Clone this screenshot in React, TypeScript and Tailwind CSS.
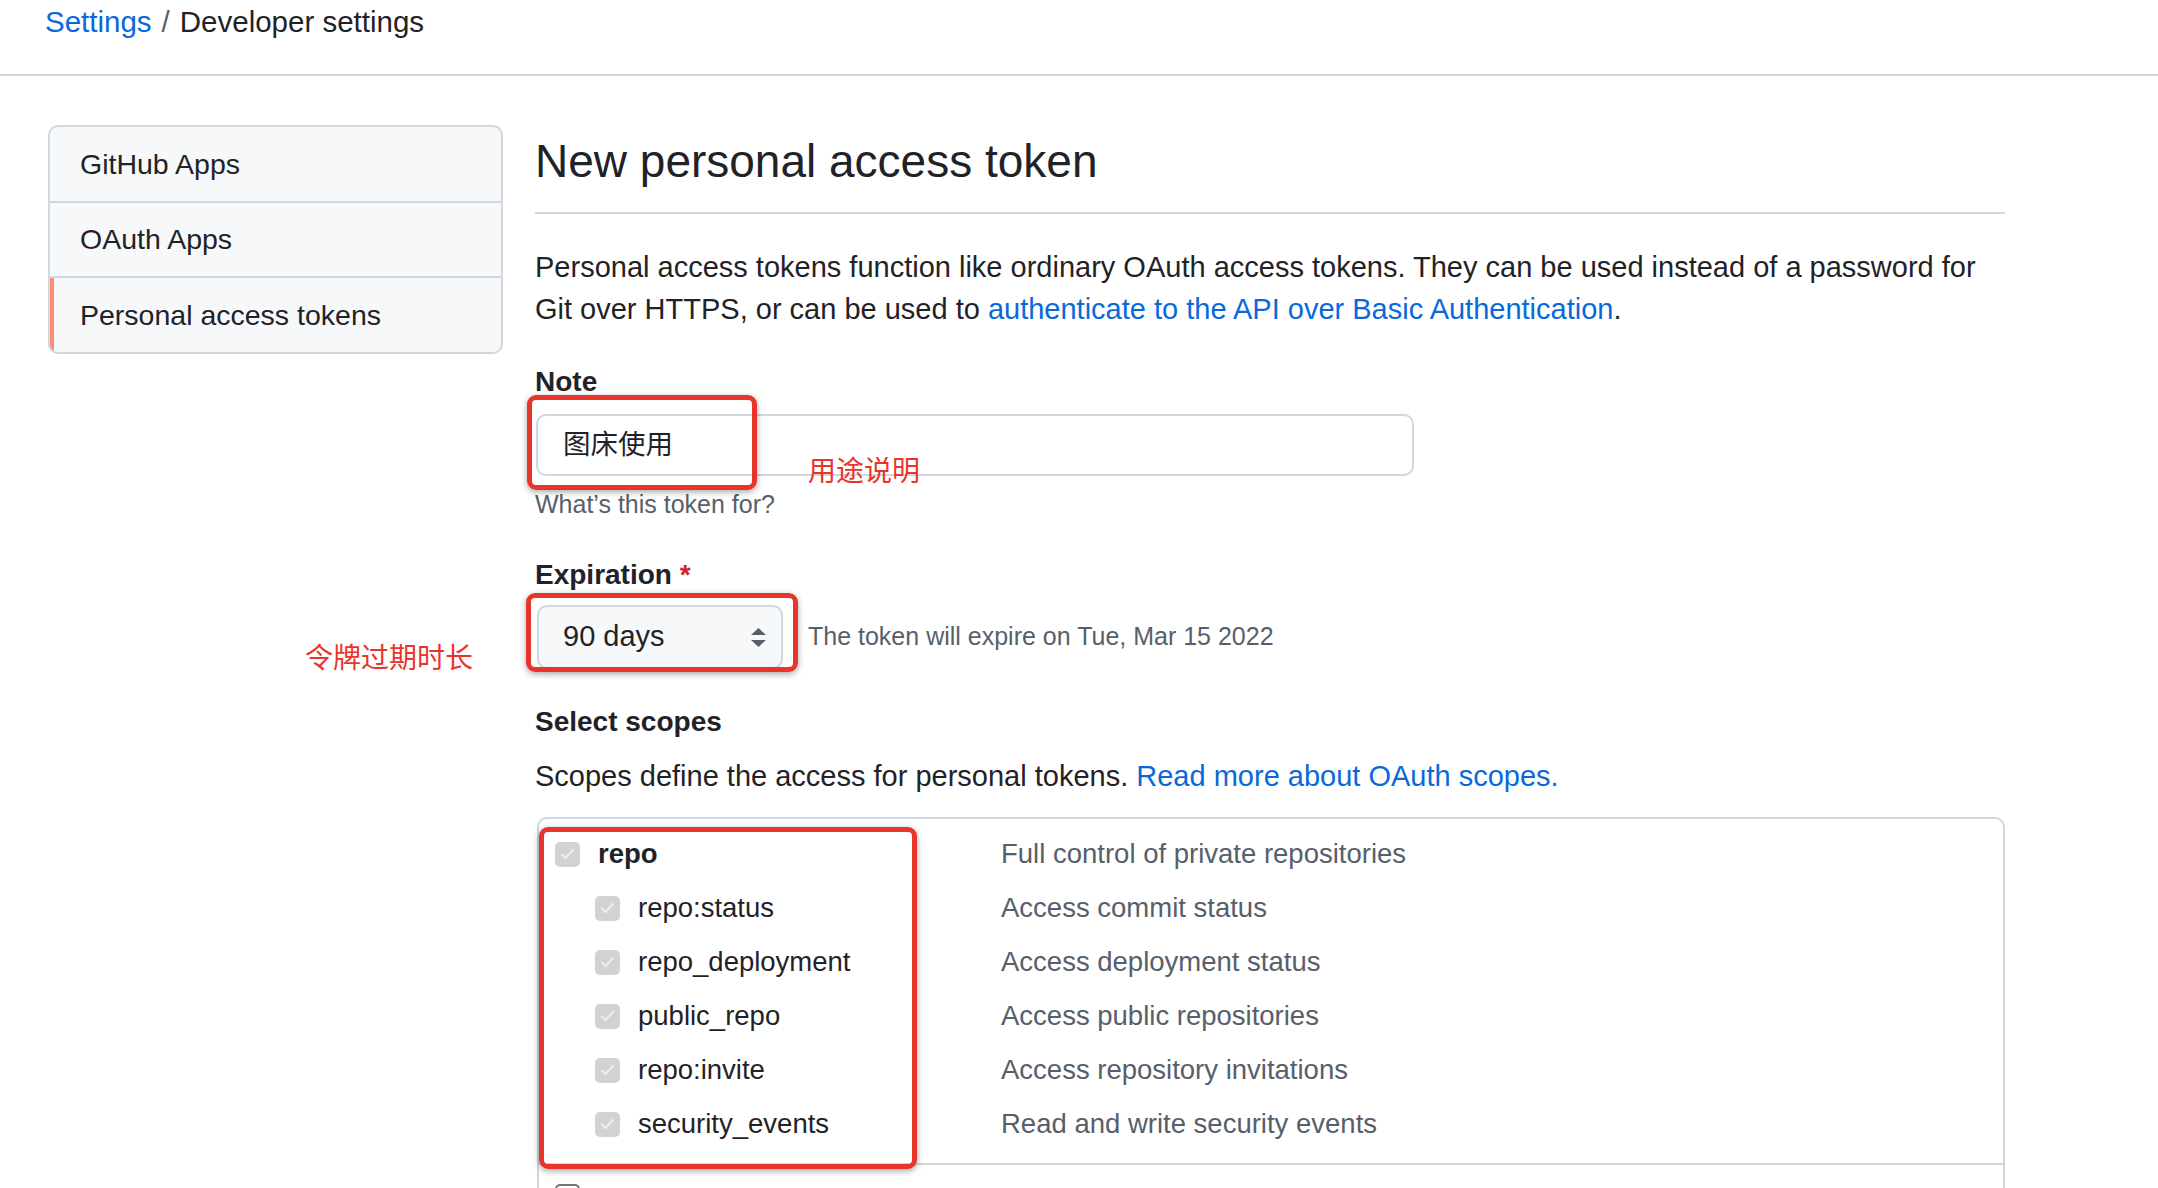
import React from "react";

const scopes = [
  { name: "repo", desc: "Full control of private repositories", top: true },
  { name: "repo:status", desc: "Access commit status" },
  { name: "repo_deployment", desc: "Access deployment status" },
  { name: "public_repo", desc: "Access public repositories" },
  { name: "repo:invite", desc: "Access repository invitations" },
  { name: "security_events", desc: "Read and write security events" },
];

function Checked() {
  return (
    <span className="flex h-[25px] w-[25px] shrink-0 items-center justify-center rounded-[5px] bg-[#d2d2d2]">
      <svg width="15" height="12" viewBox="0 0 15 12">
        <path d="M2 6.5l3.5 3.5L13 2" fill="none" stroke="#ececec" strokeWidth="2.4" strokeLinecap="round" strokeLinejoin="round" />
      </svg>
    </span>
  );
}

function ScopeRow({ name, desc, top }: { name: string; desc: string; top?: boolean }) {
  return (
    <div className="flex h-[54px] items-center">
      <div className={`flex w-[462px] shrink-0 items-center gap-[18px] ${top ? "pl-[16px]" : "pl-[56px]"}`}>
        <Checked />
        <span className={`text-[27.5px] text-[#1f2328] ${top ? "font-bold" : ""}`}>{name}</span>
      </div>
      <span className="text-[27.5px] text-[#57606a]">{desc}</span>
    </div>
  );
}

export default function App() {
  return (
    <div className="relative h-[1188px] w-[2158px] overflow-hidden bg-white font-['Liberation_Sans','Noto_Sans_CJK_SC',sans-serif] text-[#1f2328]">
      <header className="h-[76px] border-b-2 border-[#d0d7de] pl-[45px] pt-[4px] text-[29.5px] leading-[36px]">
        <a className="text-[#0969da]">Settings</a>
        <span className="mx-[10px] text-[#57606a]">/</span>
        <span>Developer settings</span>
      </header>

      <div className="flex pl-[48px] pt-[48px]">
        <nav className="mt-px w-[455px] self-start overflow-hidden rounded-[10px] border-2 border-[#d0d7de] bg-[#f6f8fa] text-[28.5px]">
          <div className="flex h-[76px] items-center border-b-2 border-[#d0d7de] pl-[30px]">GitHub Apps</div>
          <div className="flex h-[75px] items-center border-b-2 border-[#d0d7de] pl-[30px]">OAuth Apps</div>
          <div className="flex h-[74px] items-center border-l-4 border-[#fd8c73] pl-[26px]">Personal access tokens</div>
        </nav>

        <main className="ml-[32px] w-[1470px]">
          <h2 className="border-b-2 border-[#d0d7de] pb-[16px] pt-[3px] text-[46px] font-normal leading-[69px]">
            New personal access token
          </h2>
          <p className="mt-[32px] text-[29px] leading-[42px]">
            Personal access tokens function like ordinary OAuth access tokens. They can be used instead of a password for
            Git over HTTPS, or can be used to <a className="text-[#0969da]">authenticate to the API over Basic Authentication</a>.
          </p>

          <div className="mt-[31px] text-[28px] font-bold leading-[42px]">Note</div>
          <div className="ml-px mt-[11px] flex h-[62px] w-[878px] items-center rounded-[10px] border-2 border-[#d0d7de] bg-white px-[25px] text-[27.5px]">
            图床使用
          </div>
          <div className="mt-[10px] text-[25px] leading-[36px] text-[#57606a]">What’s this token for?</div>

          <div className="mt-[32px] text-[28px] font-bold leading-[42px]">
            Expiration <span className="text-[#cf222e]">*</span>
          </div>
          <div className="mt-[9px] flex items-center gap-[25px]">
            <div className="ml-[2px] flex h-[64px] w-[246px] items-center justify-between rounded-[10px] border-2 border-[#d0d7de] bg-[#f6f8fa] pl-[24px] pr-[15px] text-[29px] shadow-[0_2px_3px_rgba(31,35,40,0.06)]">
              <span>90 days</span>
              <svg width="15" height="19" viewBox="0 0 15 19">
                <path d="M7.5 0L15 7H0z M0 12h15l-7.5 7z" fill="#57606a" />
              </svg>
            </div>
            <span className="text-[25px] text-[#57606a]">The token will expire on Tue, Mar 15 2022</span>
          </div>

          <div className="mt-[32px] text-[28px] font-bold leading-[42px]">Select scopes</div>
          <p className="mt-[12px] text-[29px] leading-[42px]">
            Scopes define the access for personal tokens. <a className="text-[#0969da]">Read more about OAuth scopes.</a>
          </p>

          <div className="ml-[2px] mt-[20px] w-[1468px] rounded-[10px] border-2 border-[#d0d7de]">
            <div className="border-b-2 border-[#d0d7de] pb-[12px] pt-[8px]">
              {scopes.map((s) => (
                <ScopeRow key={s.name} {...s} />
              ))}
            </div>
            <div className="pl-[16px] pt-[19px]">
              <span className="block h-[25px] w-[25px] rounded-[5px] border-2 border-[#6e7781] bg-white" />
            </div>
          </div>
        </main>
      </div>

      {/* red annotations */}
      <div className="absolute left-[527px] top-[395px] h-[95px] w-[230px] rounded-[9px] border-[5px] border-[#e8352b] shadow-[0_2px_6px_rgba(0,0,0,0.35)]" />
      <div className="absolute left-[526px] top-[593px] h-[79px] w-[272px] rounded-[9px] border-[5px] border-[#e8352b] shadow-[0_2px_6px_rgba(0,0,0,0.35)]" />
      <div className="absolute left-[539px] top-[827px] h-[342px] w-[378px] rounded-[9px] border-[5px] border-[#e8352b] shadow-[0_2px_6px_rgba(0,0,0,0.35)]" />
      <div className="absolute left-[808px] top-[452px] text-[28px] leading-[40px] text-[#e8352b]">用途说明</div>
      <div className="absolute left-[305px] top-[639px] text-[28px] leading-[40px] text-[#e8352b]">令牌过期时长</div>
    </div>
  );
}
